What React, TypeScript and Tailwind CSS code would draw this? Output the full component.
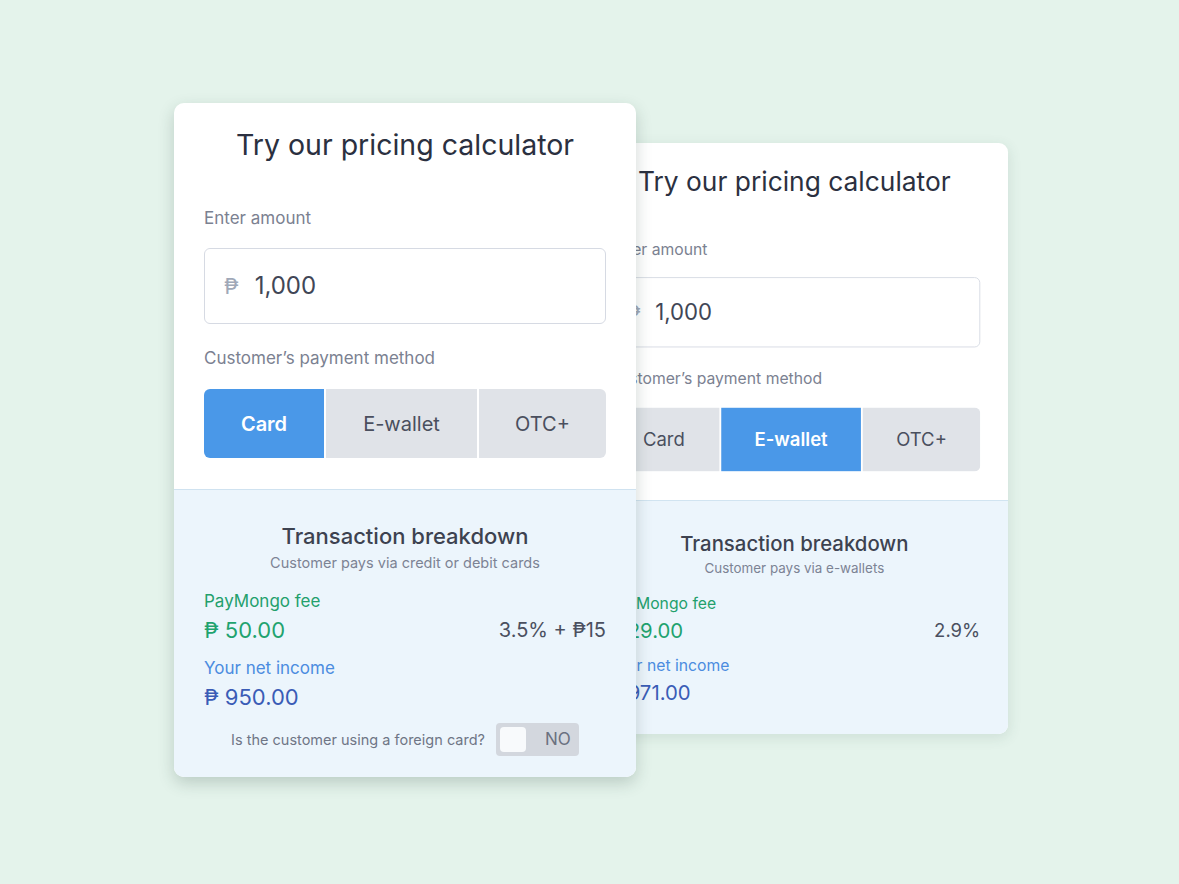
import React from "react";

type Method = "card" | "ewallet" | "otc";

function Calculator({
  method,
  subtitle,
  fee,
  feeRate,
  net,
  showToggle,
}: {
  method: Method;
  subtitle: string;
  fee: string;
  feeRate: string;
  net: string;
  showToggle: boolean;
}) {
  const seg = (active: boolean) =>
    active
      ? "bg-[#4a98e8] text-white font-semibold"
      : "bg-[#e0e3e8] text-[#4a4f5e]";
  return (
    <div className="w-[462px] rounded-[10px] overflow-hidden bg-white">
      <div className="px-[30px] pt-[24px] pb-[31px]">
        <h1 className="text-[28.5px] leading-[36px] text-center text-[#2b3040] font-normal">
          Try our pricing calculator
        </h1>
        <div className="mt-[43px] text-[17px] leading-[24px] text-[#7b8191]">
          Enter amount
        </div>
        <div className="mt-[18px] h-[76px] rounded-[6px] border border-[#d6dae3] flex items-center px-[19px]">
          <span className="text-[22px] text-[#a0a8b8]">₱</span>
          <span className="ml-[16px] text-[24px] text-[#414656]">1,000</span>
        </div>
        <div className="mt-[22px] text-[17px] leading-[24px] text-[#7b8191]">
          Customer’s payment method
        </div>
        <div className="mt-[19px] h-[69px] flex gap-[2px] rounded-[6px] overflow-hidden text-[20px]">
          <div className={`w-[120px] flex items-center justify-center ${seg(method === "card")}`}>
            Card
          </div>
          <div className={`w-[151px] flex items-center justify-center ${seg(method === "ewallet")}`}>
            E-wallet
          </div>
          <div className={`flex-1 flex items-center justify-center ${seg(method === "otc")}`}>
            OTC+
          </div>
        </div>
      </div>
      <div
        className={`bg-[#ecf5fc] border-t border-[#cfe2f0] px-[30px] pt-[32px] ${
          showToggle ? "pb-[21px]" : "pb-[30px]"
        }`}
      >
        <div className="text-center text-[22px] leading-[28px] font-medium text-[#3d4250]">
          Transaction breakdown
        </div>
        <div className="mt-[3px] text-center text-[14.5px] leading-[20px] text-[#7c8394]">
          {subtitle}
        </div>
        <div className="mt-[16px] text-[17px] leading-[24px] text-[#23a06c]">PayMongo fee</div>
        <div className="mt-[2px] flex items-center justify-between leading-[30px]">
          <span className="text-[22px] text-[#1fa36f]">{fee}</span>
          <span className="text-[20px] text-[#4b5060]">{feeRate}</span>
        </div>
        <div className="mt-[11px] text-[17px] leading-[24px] text-[#4b8ce0]">Your net income</div>
        <div className="mt-[2px] text-[22px] leading-[30px] text-[#3a5cb6]">{net}</div>
        {showToggle && (
          <div className="mt-[11px] flex items-center justify-center gap-[11px]">
            <span className="text-[14.5px] text-[#6f7686]">Is the customer using a foreign card?</span>
            <div className="w-[83px] h-[33px] rounded-[4px] bg-[#d3d7de] flex items-center px-[4px]">
              <div className="w-[26px] h-[25px] rounded-[4px] bg-[#f8fafc]" />
              <span className="ml-[19px] text-[17px] text-[#6b7180]">NO</span>
            </div>
          </div>
        )}
      </div>
    </div>
  );
}

export default function App() {
  return (
    <div
      className="relative w-[1179px] h-[884px] overflow-hidden bg-[#e4f3eb]"
      style={{ fontFamily: "Inter, 'Noto Sans', 'Liberation Sans', sans-serif" }}
    >
      <div className="absolute left-[546px] top-[143px] origin-top-right scale-[0.925] rounded-[10px] shadow-[0_4px_14px_rgba(60,90,80,0.12)]">
        <Calculator
          method="ewallet"
          subtitle="Customer pays via e-wallets"
          fee="₱ 29.00"
          feeRate="2.9%"
          net="₱ 971.00"
          showToggle={false}
        />
      </div>
      <div className="absolute left-[174px] top-[103px] z-10 rounded-[10px] shadow-[0_6px_16px_rgba(40,70,60,0.22)]">
        <Calculator
          method="card"
          subtitle="Customer pays via credit or debit cards"
          fee="₱ 50.00"
          feeRate="3.5% + ₱15"
          net="₱ 950.00"
          showToggle={true}
        />
      </div>
    </div>
  );
}
